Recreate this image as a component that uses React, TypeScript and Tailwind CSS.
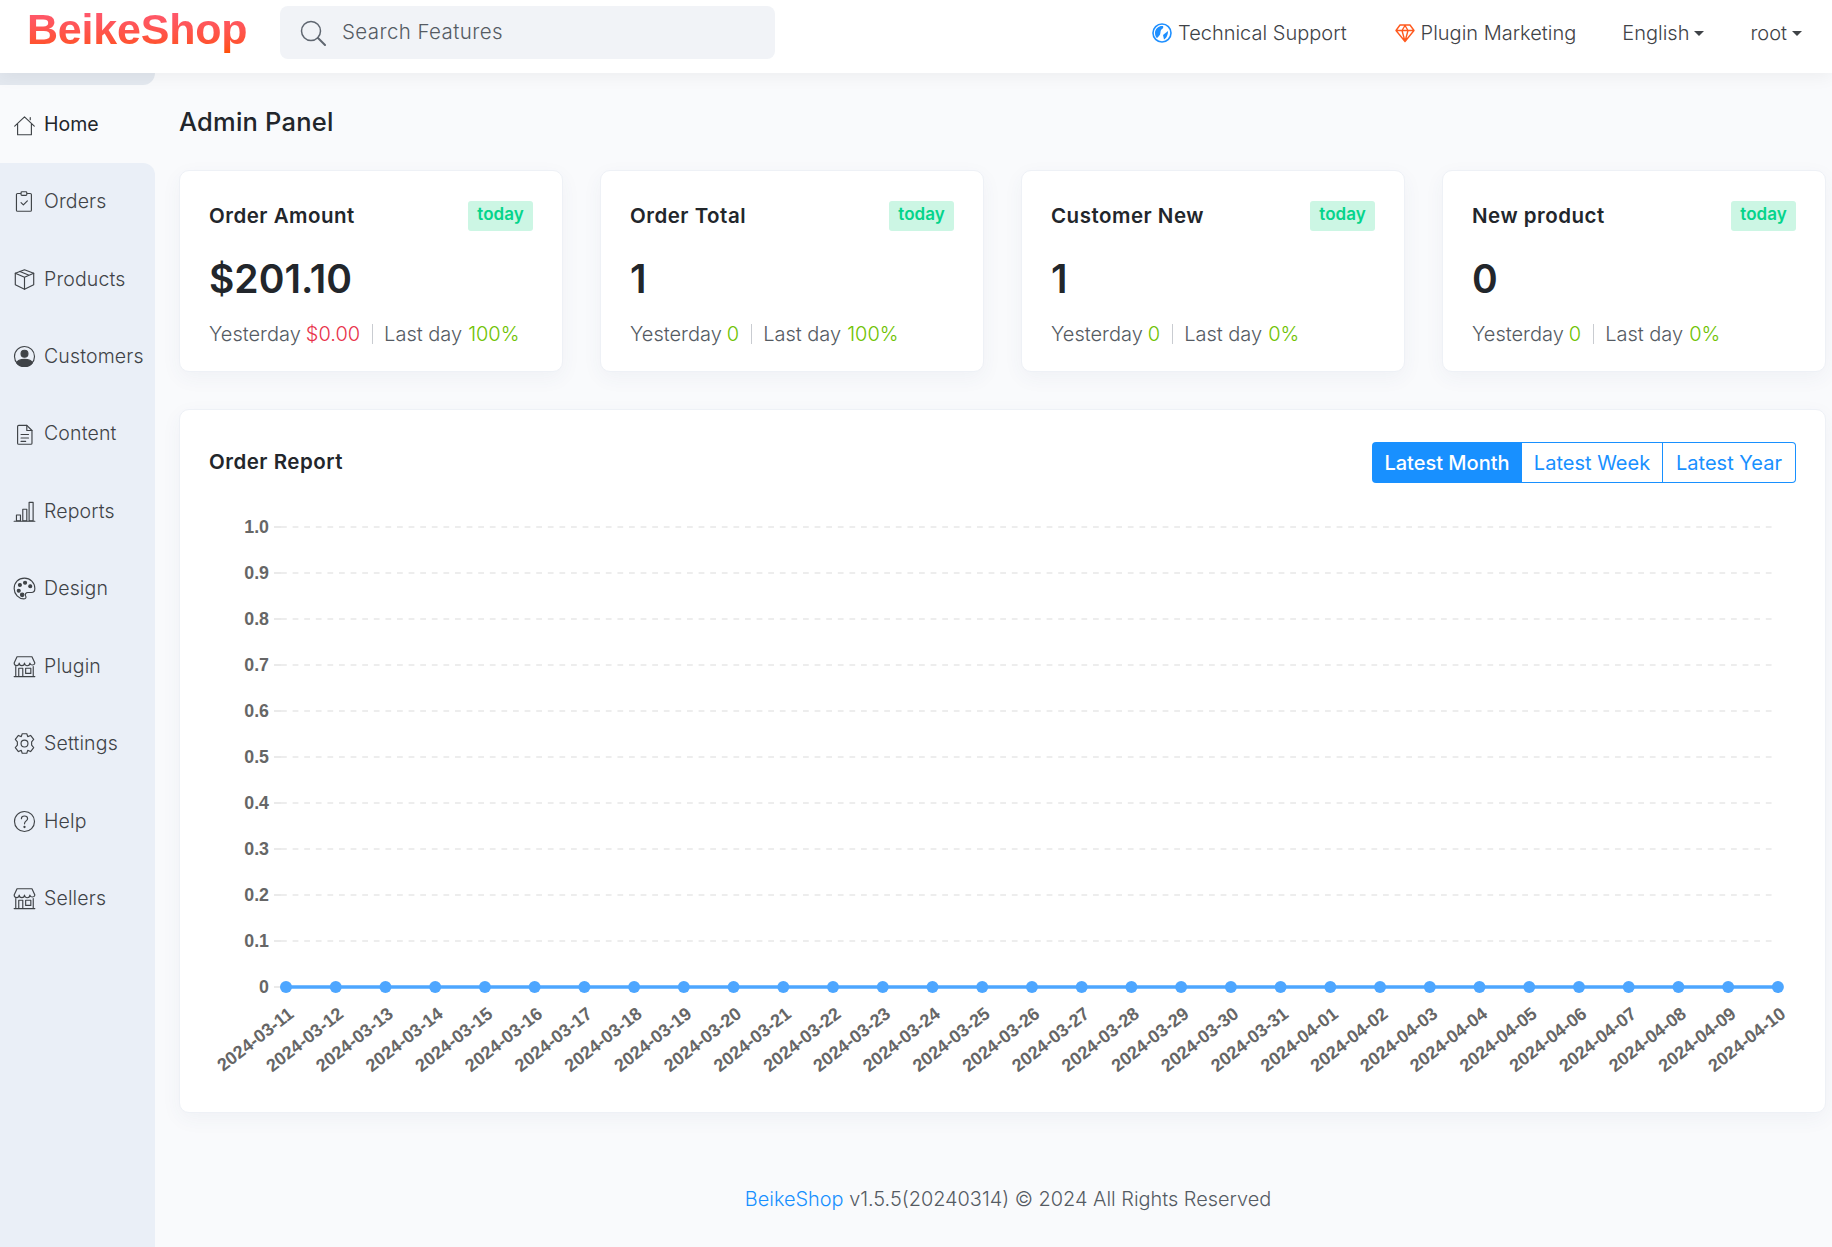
import React from "react";

const FONT = "font-['Inter','Noto_Sans',sans-serif]";

type IconProps = { children: React.ReactNode };
const Ico = ({ children }: IconProps) => (
  <svg viewBox="0 0 20 20" className="w-[23px] h-[23px] shrink-0" fill="none" stroke="#3f4347" strokeWidth="1" strokeLinecap="round" strokeLinejoin="round">
    {children}
  </svg>
);

const Store = () => (
  <Ico>
    <path d="M3.5 1.5 L16.5 1.5 L19 7 A2.2 2.2 0 0 1 14.7 7 A2.3 2.3 0 0 1 10 7 A2.3 2.3 0 0 1 5.4 7 A2.2 2.2 0 0 1 1 7 Z" />
    <path d="M2.4 10 V18.5 M17.6 10 V18.5 M1 18.8 H19" />
    <path d="M5 18.5 V11.5 H8.5 V18.5 M11 11.5 H15.5 V16 H11 Z" />
  </Ico>
);

const nav: [string, React.ReactNode][] = [
  ["Orders", <Ico><path d="M6.5 3 H4 a1 1 0 0 0-1 1 V17.5 a1 1 0 0 0 1 1 H15 a1 1 0 0 0 1-1 V4 a1 1 0 0 0-1-1 H12.5" /><rect x="7" y="1.5" width="5" height="3.2" rx="0.8" /><path d="M7 11 L9 13 L12.5 9.5" /></Ico>],
  ["Products", <Ico><path d="M10 1.5 L18 4.5 V14.5 L10 18.5 L2 14.5 V4.5 Z" /><path d="M2 4.5 L10 8 L18 4.5 M10 8 V18.5 M6 3 L14 6.3" /></Ico>],
  ["Customers", <Ico><circle cx="10" cy="10" r="8.7" /><circle cx="10" cy="7.6" r="3" fill="#3f4347" /><path d="M3.2 15.5 C4.5 11.5 15.5 11.5 16.8 15.5 C15 18 12.5 18.7 10 18.7 C7.5 18.7 5 18 3.2 15.5 Z" fill="#3f4347" /></Ico>],
  ["Content", <Ico><path d="M4 3 a1 1 0 0 1 1-1 H12 L16.5 6.5 V17.5 a1 1 0 0 1-1 1 H5 a1 1 0 0 1-1-1 Z" /><path d="M12 2 V6.5 H16.5 M7 10 H13.5 M7 13 H13.5 M7 16 H11" /></Ico>],
  ["Reports", <Ico><path d="M1 18.5 H19" /><rect x="3" y="13" width="3.5" height="5" /><rect x="8.5" y="8" width="3.5" height="10" /><rect x="14" y="2" width="3.5" height="16" /></Ico>],
  ["Design", <Ico><path d="M10 1 C4.5 1 1 5 1 10 C1 15 5 19 9.5 19 C11.5 19 11.5 17.5 11 16.5 C10.3 15 11 13.5 13 13.5 H16 C18 13.5 19 12 19 10 C19 5 15 1 10 1 Z" /><circle cx="6" cy="7" r="1.3" fill="#3f4347" /><circle cx="10.5" cy="5" r="1.3" fill="#3f4347" /><circle cx="15" cy="8" r="1.3" fill="#3f4347" /><circle cx="5" cy="12" r="1.3" fill="#3f4347" /><circle cx="8" cy="15.5" r="1.5" fill="#3f4347" /></Ico>],
  ["Plugin", <Store />],
  ["Settings", <Ico><path d="M8 1.5 H12 L12.8 4 L15.3 3 L18 6.5 L16.2 8.5 V11.5 L18 13.5 L15.3 17 L12.8 16 L12 18.5 H8 L7.2 16 L4.7 17 L2 13.5 L3.8 11.5 V8.5 L2 6.5 L4.7 3 L7.2 4 Z" /><circle cx="10" cy="10" r="3" /></Ico>],
  ["Help", <Ico><circle cx="10" cy="10" r="8.7" /><path d="M7.3 7.5 C7.3 4.5 12.7 4.5 12.7 7.5 C12.7 9.5 10 9.5 10 12" /><circle cx="10" cy="14.8" r="0.5" fill="#3f4347" /></Ico>],
  ["Sellers", <Store />],
];

const cards = [
  { title: "Order Amount", value: "$201.10", y: "$0.00", yc: "text-[#e8324a]", l: "100%" },
  { title: "Order Total", value: "1", y: "0", yc: "text-[#6ec200]", l: "100%" },
  { title: "Customer New", value: "1", y: "0", yc: "text-[#6ec200]", l: "0%" },
  { title: "New product", value: "0", y: "0", yc: "text-[#6ec200]", l: "0%" },
];

const dates = [
  ...Array.from({ length: 21 }, (_, i) => `2024-03-${i + 11}`),
  ...Array.from({ length: 10 }, (_, i) => `2024-04-${String(i + 1).padStart(2, "0")}`),
];

const Chart = () => {
  const ox = -180;
  const oy = -500.5;
  const px = (i: number) => 286 + i * 49.73 + ox;
  const py = (v: number) => 986.5 - v * 460 + oy;
  const labels = ["0", "0.1", "0.2", "0.3", "0.4", "0.5", "0.6", "0.7", "0.8", "0.9", "1.0"];
  return (
    <svg width="1644" height="610" className="block" style={{ fontFamily: "'Liberation Sans', sans-serif" }}>
      {labels.map((t, i) => (
        <g key={t}>
          <line x1={274 + ox} x2={281 + ox} y1={py(i / 10)} y2={py(i / 10)} stroke="#dcdcdc" strokeWidth="1.2" />
          <line x1={281 + ox} x2={1777 + ox} y1={py(i / 10)} y2={py(i / 10)} stroke="#dcdcdc" strokeWidth="1.2" strokeDasharray="5.8 5.8" />
          <text x={269 + ox} y={py(i / 10) + 6} textAnchor="end" fontSize="17.8" fontWeight="700" fill="#666">{t}</text>
        </g>
      ))}
      <line x1={px(0)} x2={px(30)} y1={py(0)} y2={py(0)} stroke="#4da6ff" strokeWidth="3.5" />
      {dates.map((d, i) => (
        <g key={d}>
          <circle cx={px(i)} cy={py(0)} r="6" fill="#4da6ff" />
          <text
            transform={`translate(${px(i) + 9} ${py(0) + 29}) rotate(-38)`}
            textAnchor="end"
            fontSize="18"
            fontWeight="700"
            fill="#666"
          >
            {d}
          </text>
        </g>
      ))}
    </svg>
  );
};

export default function App() {
  return (
    <div className={`w-full h-[1247px] flex flex-col overflow-hidden bg-[#f9fafc] text-[#2a2e33] ${FONT}`}>
      <header className="relative z-10 h-[73px] shrink-0 bg-white flex items-center shadow-[0_4px_16px_rgba(0,0,0,0.05)]">
        <div className="w-[280px] shrink-0 pl-[27px] -mt-[15px]">
          <span className="text-[43px] leading-[56px] font-bold tracking-[-0.2px] bg-linear-to-b from-[#ff5878] to-[#ff5000] bg-clip-text text-transparent font-['Liberation_Sans',sans-serif]">BeikeShop</span>
        </div>
        <div className="w-[495px] h-[53px] -mt-[8px] rounded-lg bg-[#f1f3f7] flex items-center pl-[20px] gap-[16px]">
          <svg viewBox="0 0 26 26" className="w-[26px] h-[26px]" fill="none" stroke="#5f6670" strokeWidth="1.5" strokeLinecap="round">
            <circle cx="11" cy="11" r="9.5" />
            <path d="M18 18 L25 25" strokeWidth="2" />
          </svg>
          <span className="text-[20.5px] tracking-[0.4px] font-light text-[#555b63]">Search Features</span>
        </div>
        <div className="ml-auto flex items-center pr-[30px] text-[#3f4347] text-[20px] font-light -mt-[7px]">
          <span className="flex items-center gap-[6px]">
            <svg viewBox="0 0 20 20" className="w-5 h-5">
              <circle cx="10" cy="10" r="9" fill="none" stroke="#1e8fff" strokeWidth="1.6" />
              <path d="M3 9 C4 5 7 2.5 11 3 C12 5 10 6 9 7 C8 9 9 11 7 13 C6 14 5 16 4 14 C3 12 3 11 3 9 Z M11 12 L16 8 C16 11 15 15 12 16.5 Z" fill="#1e8fff" />
            </svg>
            Technical Support
          </span>
          <span className="flex items-center gap-[6px] ml-[48px]">
            <svg viewBox="0 0 20 20" className="w-5 h-5" fill="none" stroke="#ff5a1f" strokeWidth="1.4" strokeLinejoin="round">
              <path d="M5 2 H15 L19 7.5 L10 18.5 L1 7.5 Z M1 7.5 H19 M7 7.5 L10 18.5 L13 7.5 L10 2.5 Z" />
            </svg>
            Plugin Marketing
          </span>
          <span className="flex items-center gap-[5px] ml-[46px]">
            English
            <span className="w-0 h-0 border-x-[5px] border-x-transparent border-t-[5px] border-t-[#3f4347]" />
          </span>
          <span className="flex items-center gap-[5px] ml-[46px]">
            root
            <span className="w-0 h-0 border-x-[5px] border-x-transparent border-t-[5px] border-t-[#3f4347]" />
          </span>
        </div>
      </header>

      <div className="flex flex-1 min-h-0">
        <aside className="w-[155px] shrink-0 flex flex-col">
          <div className="h-[12px] bg-[#e3e8ef] rounded-br-[12px]" />
          <div className="h-[78px] flex items-center gap-[8.5px] pl-[12.5px] pt-[2px] text-[19.5px] font-normal text-[#22262b]">
            <Ico><path d="M1.5 10.5 L10 2.5 L18.5 10.5 M4 9 V18 H16 V9 M15 5 V3" /></Ico>
            Home
          </div>
          <nav className="flex-1 bg-[#eaeff7] rounded-tr-[12px]">
            {nav.map(([label, icon]) => (
              <div key={label} className="h-[77.45px] flex items-center gap-[8.5px] pl-[12.5px] text-[19.5px] tracking-[0.15px] font-light text-[#3f4347]">
                {icon}
                {label}
              </div>
            ))}
          </nav>
        </aside>

        <main className="flex-1 min-w-0 pl-[24px] pr-[6px] flex flex-col">
          <h1 className="h-[97px] pt-[31px] text-[25.5px] tracking-[0.2px] leading-[36px] font-medium text-[#22262b]">Admin Panel</h1>
          <div className="grid grid-cols-4 gap-[37px]">
            {cards.map((c) => (
              <div key={c.title} className="h-[202px] bg-white rounded-[10px] border border-[#eef1f6] shadow-[0_6px_20px_rgba(60,80,120,0.05)] px-[29px] pt-[30px]">
                <div className="flex justify-between items-start">
                  <span className="text-[20.5px] tracking-[0.5px] leading-[30px] font-semibold text-[#22262b]">{c.title}</span>
                  <span className="h-[30px] w-[65px] rounded-[3px] bg-[#ccf6e4] text-[#05d48b] text-[17px] font-semibold text-center leading-[26px]">today</span>
                </div>
                <div className="mt-[22px] h-[52px] text-[39px] leading-[52px] font-semibold text-[#22262b]">{c.value}</div>
                <div className="mt-[14px] flex items-center text-[20px] font-light text-[#555b63]">
                  <span>Yesterday</span>
                  <span className={`ml-[5px] ${c.yc}`}>{c.y}</span>
                  <span className="w-px h-[20px] bg-[#c9ccd1] mx-[11.5px]" />
                  <span>Last day</span>
                  <span className="ml-[6px] text-[#6ec200]">{c.l}</span>
                </div>
              </div>
            ))}
          </div>

          <div className="mt-[36.5px] h-[704px] bg-white rounded-[10px] border border-[#eef1f6] shadow-[0_6px_20px_rgba(60,80,120,0.05)]">
            <div className="h-[91px] flex items-center justify-between pl-[29px] pr-[29px] pt-[15px]">
              <span className="text-[20.5px] tracking-[0.5px] font-semibold text-[#22262b]">Order Report</span>
              <div className="flex h-[41px] text-[20px] text-[#1890ff]">
                <span className="w-[150px] flex items-center justify-center bg-[#1890ff] text-white rounded-l-[4px] font-medium">Latest Month</span>
                <span className="w-[141px] flex items-center justify-center border-y border-r border-[#1890ff]">Latest Week</span>
                <span className="w-[133px] flex items-center justify-center border-y border-r border-[#1890ff] rounded-r-[4px]">Latest Year</span>
              </div>
            </div>
            <Chart />
          </div>

          <footer className="mt-[72.5px] text-center text-[19.9px] font-light text-[#555b63] pl-[11px]">
            <span className="text-[#1890ff]">BeikeShop</span> v1.5.5(20240314) © 2024 All Rights Reserved
          </footer>
        </main>
      </div>
    </div>
  );
}
